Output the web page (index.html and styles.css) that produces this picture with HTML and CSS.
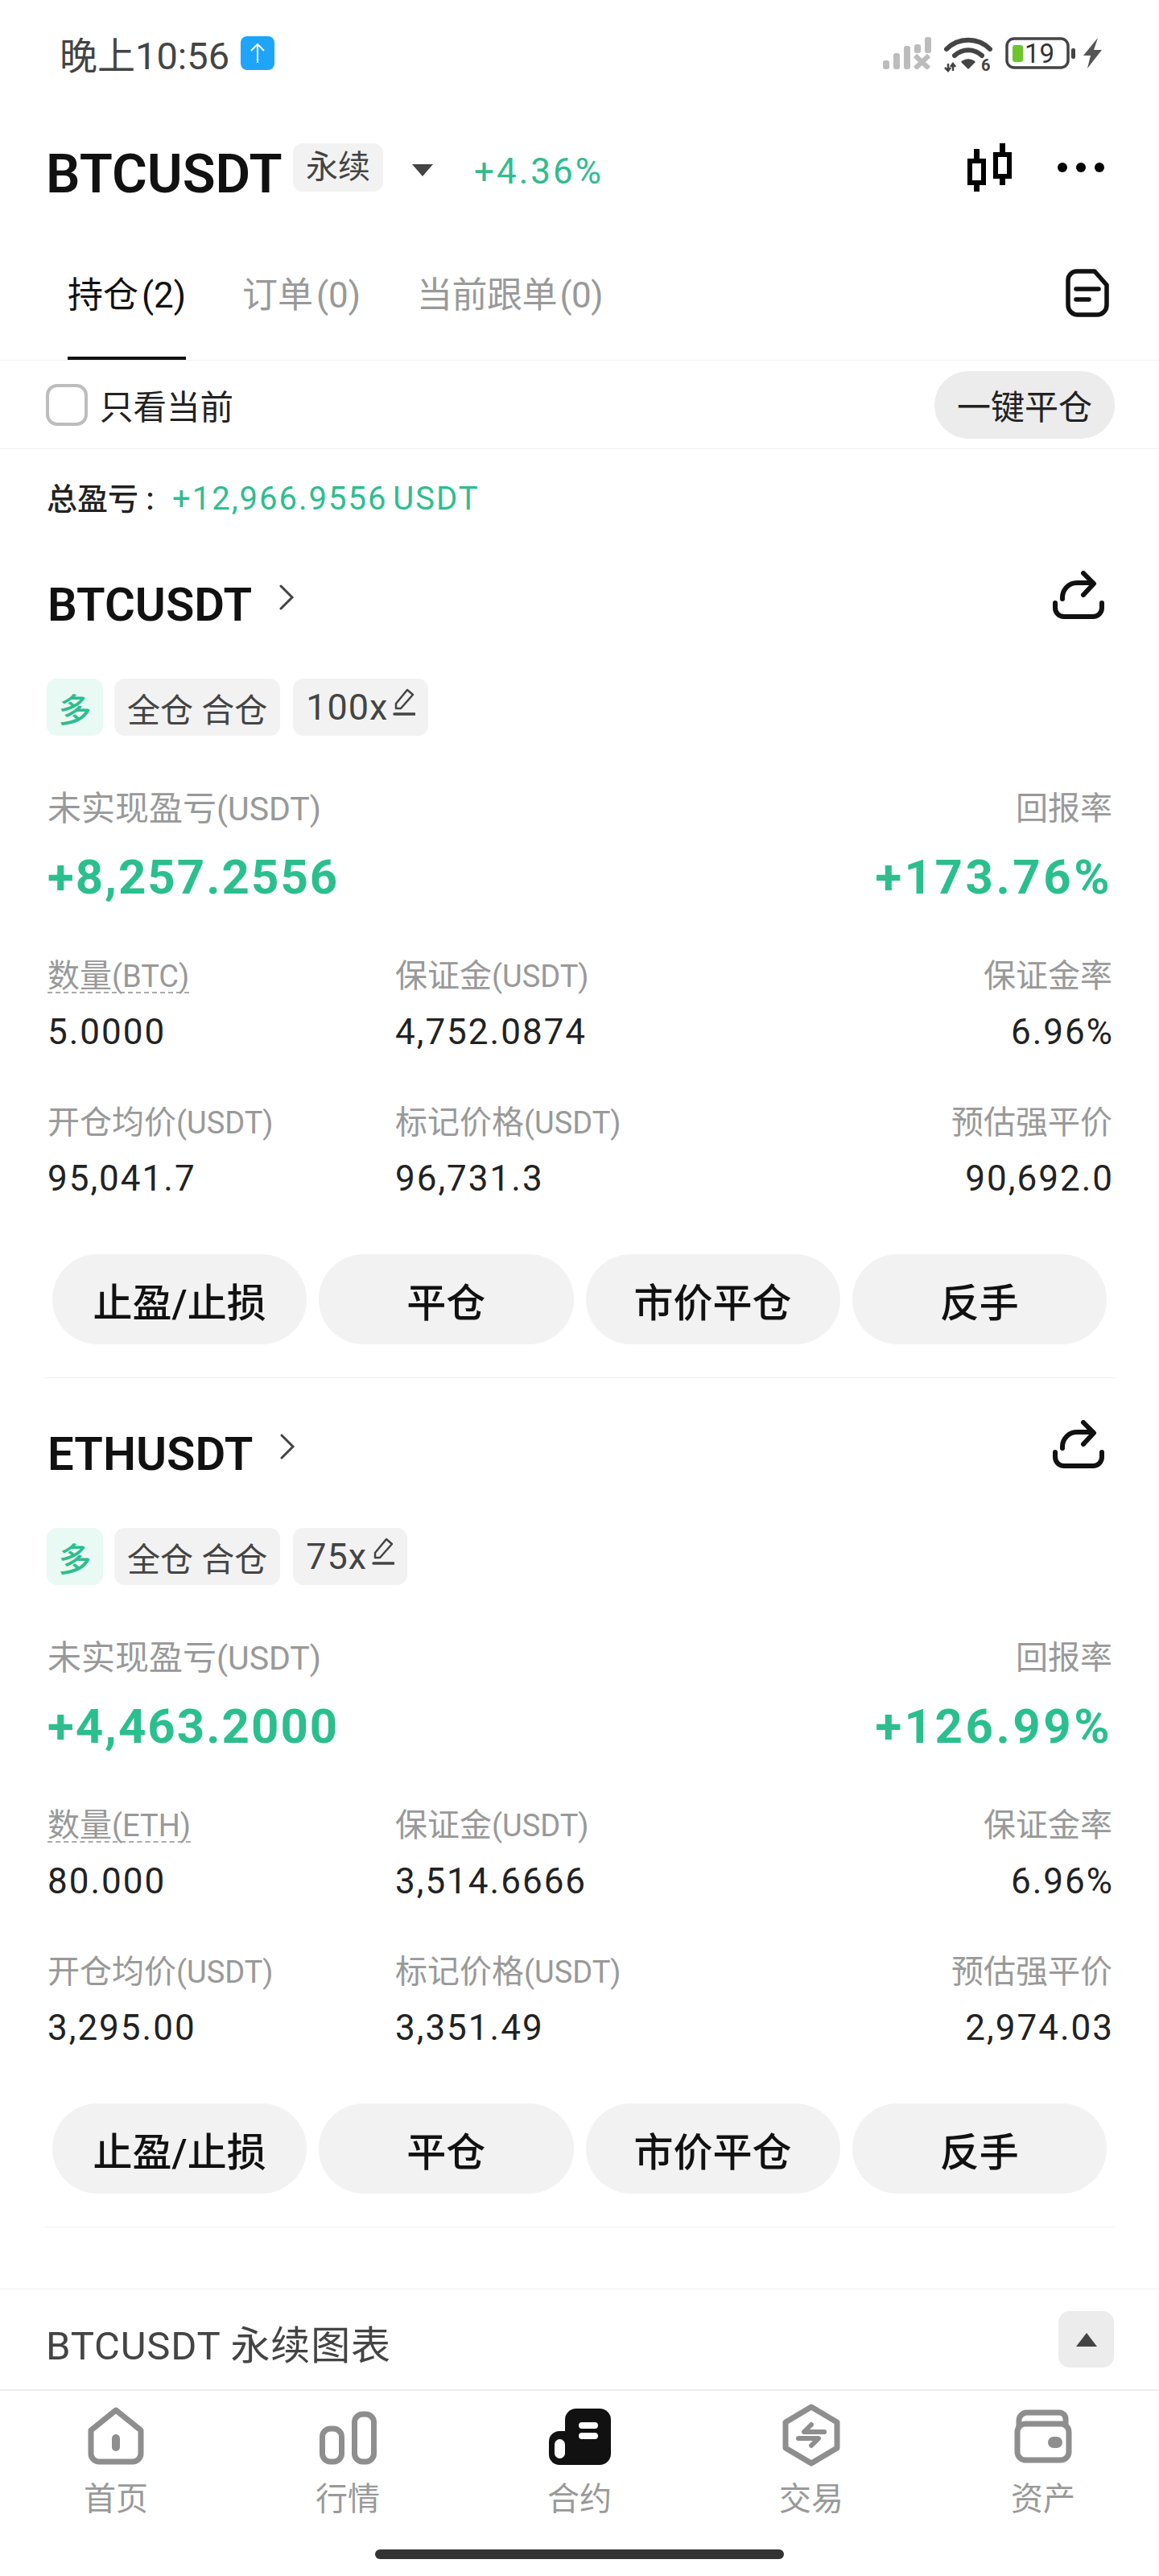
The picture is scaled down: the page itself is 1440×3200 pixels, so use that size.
FILE: index.html
```html
<!DOCTYPE html>
<html lang="zh-CN">
<head>
  <meta charset="UTF-8">
  <meta name="viewport" content="width=device-width, initial-scale=1.0">
  <title>BTCUSDT 永续</title>
  <link rel="stylesheet" href="styles.css">
</head>
<body>
  <!-- status bar -->
  <div class="status">
    <div class="status-left">
      <span class="clock">晚上10:56</span>
      <svg class="upload" width="42" height="42" viewBox="0 0 42 42">
        <rect width="42" height="42" rx="8" fill="#1ea5fb"/>
        <path d="M21 33V10M13 18l8-8 8 8" fill="none" stroke="#fff" stroke-width="2"/>
      </svg>
    </div>
    <div class="status-right">
      <svg width="60" height="40" viewBox="0 0 60 40">
        <g fill="#bcbcbc">
          <rect x="0" y="29" width="8" height="11" rx="3"/>
          <rect x="13" y="20" width="8" height="20" rx="3"/>
          <rect x="26" y="11" width="8" height="29" rx="3"/>
          <rect x="39" y="9" width="8" height="11" rx="3"/>
          <rect x="52" y="0" width="8" height="20" rx="3"/>
        </g>
        <path d="M40 23l17 16M57 23L40 39" stroke="#bcbcbc" stroke-width="6"/>
      </svg>
      <svg class="wifi" width="60" height="50" viewBox="0 0 60 50">
        <g fill="none" stroke="#444" stroke-linecap="round">
          <path d="M3 16C18 1 42 1 57 16" stroke-width="6"/>
          <path d="M13 24c10-9 24-9 34 0" stroke-width="6"/>
        </g>
        <path d="M21 32c5-5 13-5 18 0l-9 9z" fill="#444"/>
        <path d="M5 34v9M1 39l4 4 3-4M11 43v-9M8 38l3-4 3 4" fill="none" stroke="#444" stroke-width="2.500"/>
        <text class="wifi-six" x="46" y="43">6</text>
      </svg>
      <svg width="88" height="40" viewBox="0 0 88 40">
        <rect x="2" y="2" width="76" height="36" rx="9" fill="none" stroke="#444" stroke-width="3.500"/>
        <rect x="9" y="10" width="13" height="21" rx="3" fill="#6cc52d"/>
        <rect x="82" y="14" width="5" height="13" rx="2" fill="#444"/>
        <text class="battery-num" x="24" y="32">19</text>
      </svg>
      <svg class="bolt" width="24" height="38" viewBox="0 0 24 38">
        <path d="M19 0L1 22h9L6 38l18-23h-10z" fill="#555"/>
      </svg>
    </div>
  </div>

  <!-- symbol header -->
  <div class="head">
    <span class="symbol">BTCUSDT</span>
    <span class="perp">永续</span>
    <span class="caret"></span>
    <span class="change">+4.36%</span>
    <div class="head-icons">
      <svg width="56" height="60" viewBox="0 0 56 60">
        <g fill="none" stroke="#000" stroke-width="6">
          <rect x="3" y="22" width="17" height="27"/>
          <rect x="35" y="14" width="17" height="27"/>
        </g>
        <path d="M11.500 7v15M11.500 49v11M43.500 0v14M43.500 41v11" stroke="#000" stroke-width="7"/>
      </svg>
      <svg width="58" height="14" viewBox="0 0 58 14">
        <circle cx="6" cy="7" r="6"/><circle cx="29" cy="7" r="6"/><circle cx="52" cy="7" r="6"/>
      </svg>
    </div>
  </div>

  <!-- tabs -->
  <div class="tabs">
    <a class="tab active">持仓 (2)</a>
    <a class="tab">订单 (0)</a>
    <a class="tab">当前跟单 (0)</a>
    <svg class="doc-icon" width="54" height="60" viewBox="0 0 54 60">
      <path d="M14 3h22l15 17v25a12 12 0 0 1-12 12H15A12 12 0 0 1 3 45V14A11 11 0 0 1 14 3z" fill="none" stroke="#111" stroke-width="5.500" stroke-linejoin="round"/>
      <path d="M13 25h28M13 38h16" stroke="#111" stroke-width="5.500" stroke-linecap="round"/>
    </svg>
  </div>

  <div class="filter">
    <label class="check"><span class="box"></span>只看当前</label>
    <button class="close-all">一键平仓</button>
  </div>

  <div class="total">
    <span class="total-label">总盈亏 :</span>
    <span class="total-value">+12,966.9556 USDT</span>
  </div>

  <!-- BTC position -->
  <section class="card">
    <div class="card-title">
      <span class="pair">BTCUSDT</span>
      <svg class="chevron" width="20" height="32" viewBox="0 0 20 32">
        <path d="M3 2l14 14L3 30" fill="none" stroke="#444" stroke-width="3" stroke-linecap="round"/>
      </svg>
      <svg class="share" width="64" height="60" viewBox="0 0 64 60">
        <path d="M3 40v6a11 11 0 0 0 11 11h36a11 11 0 0 0 11-11v-6" fill="none" stroke="#111" stroke-width="6" stroke-linecap="round"/>
        <path d="M12 35v-2a18 18 0 0 1 18-18h20M38 3l13 13-13 14" fill="none" stroke="#111" stroke-width="6" stroke-linecap="round" stroke-linejoin="round"/>
      </svg>
    </div>
    <div class="tags">
      <span class="tag long">多</span>
      <span class="tag">全仓 合仓</span>
      <span class="tag"><span class="lever">100x</span>
        <svg class="pencil" width="28" height="36" viewBox="0 0 28 36">
          <path d="M18 3l7 6L10 26H4v-6z" fill="none" stroke="#444" stroke-width="2.500" stroke-linejoin="round"/>
          <path d="M2 33h25" stroke="#444" stroke-width="3.500" stroke-linecap="round"/>
        </svg>
      </span>
    </div>
    <div class="pnl">
      <span class="label big">未实现盈亏<span class="unit">(USDT)</span></span>
      <span class="label">回报率</span>
      <span class="pnl-value">+8,257.2556</span>
      <span class="pnl-value rate">+173.76%</span>
    </div>
    <div class="stats">
      <div class="stat"><span class="label dashed">数量<span class="unit">(BTC)</span></span><span class="value">5.0000</span></div>
      <div class="stat"><span class="label">保证金<span class="unit">(USDT)</span></span><span class="value">4,752.0874</span></div>
      <div class="stat end"><span class="label">保证金率</span><span class="value">6.96%</span></div>
      <div class="stat"><span class="label">开仓均价<span class="unit">(USDT)</span></span><span class="value">95,041.7</span></div>
      <div class="stat"><span class="label">标记价格<span class="unit">(USDT)</span></span><span class="value">96,731.3</span></div>
      <div class="stat end"><span class="label">预估强平价</span><span class="value">90,692.0</span></div>
    </div>
    <div class="actions">
      <button>止盈/止损</button>
      <button>平仓</button>
      <button>市价平仓</button>
      <button>反手</button>
    </div>
  </section>

  <!-- ETH position -->
  <section class="card">
    <div class="card-title">
      <span class="pair">ETHUSDT</span>
      <svg class="chevron" width="20" height="32" viewBox="0 0 20 32">
        <path d="M3 2l14 14L3 30" fill="none" stroke="#444" stroke-width="3" stroke-linecap="round"/>
      </svg>
      <svg class="share" width="64" height="60" viewBox="0 0 64 60">
        <path d="M3 40v6a11 11 0 0 0 11 11h36a11 11 0 0 0 11-11v-6" fill="none" stroke="#111" stroke-width="6" stroke-linecap="round"/>
        <path d="M12 35v-2a18 18 0 0 1 18-18h20M38 3l13 13-13 14" fill="none" stroke="#111" stroke-width="6" stroke-linecap="round" stroke-linejoin="round"/>
      </svg>
    </div>
    <div class="tags">
      <span class="tag long">多</span>
      <span class="tag">全仓 合仓</span>
      <span class="tag"><span class="lever">75x</span>
        <svg class="pencil" width="28" height="36" viewBox="0 0 28 36">
          <path d="M18 3l7 6L10 26H4v-6z" fill="none" stroke="#444" stroke-width="2.500" stroke-linejoin="round"/>
          <path d="M2 33h25" stroke="#444" stroke-width="3.500" stroke-linecap="round"/>
        </svg>
      </span>
    </div>
    <div class="pnl">
      <span class="label big">未实现盈亏<span class="unit">(USDT)</span></span>
      <span class="label">回报率</span>
      <span class="pnl-value">+4,463.2000</span>
      <span class="pnl-value rate">+126.99%</span>
    </div>
    <div class="stats">
      <div class="stat"><span class="label dashed">数量<span class="unit">(ETH)</span></span><span class="value">80.000</span></div>
      <div class="stat"><span class="label">保证金<span class="unit">(USDT)</span></span><span class="value">3,514.6666</span></div>
      <div class="stat end"><span class="label">保证金率</span><span class="value">6.96%</span></div>
      <div class="stat"><span class="label">开仓均价<span class="unit">(USDT)</span></span><span class="value">3,295.00</span></div>
      <div class="stat"><span class="label">标记价格<span class="unit">(USDT)</span></span><span class="value">3,351.49</span></div>
      <div class="stat end"><span class="label">预估强平价</span><span class="value">2,974.03</span></div>
    </div>
    <div class="actions">
      <button>止盈/止损</button>
      <button>平仓</button>
      <button>市价平仓</button>
      <button>反手</button>
    </div>
  </section>

  <!-- chart drawer -->
  <div class="chart-row">
    <span class="chart-title">BTCUSDT 永续图表</span>
    <span class="chart-toggle"><span class="caret-up"></span></span>
  </div>

  <!-- bottom nav -->
  <nav class="nav">
    <a class="nav-item">
      <svg width="72" height="72" viewBox="0 0 72 72">
        <path d="M36 4L67 29v29a10 10 0 0 1-10 10H15A10 10 0 0 1 5 58V29z" fill="none" stroke="#8e8e8e" stroke-width="7" stroke-linejoin="round"/>
        <rect x="31" y="34" width="10" height="21" rx="5" fill="#8e8e8e"/>
      </svg>
      首页
    </a>
    <a class="nav-item">
      <svg width="72" height="72" viewBox="0 0 72 72">
        <g fill="none" stroke="#8e8e8e" stroke-width="7">
          <rect x="4.500" y="27" width="24" height="41" rx="10"/>
          <rect x="44.500" y="9" width="24" height="59" rx="10"/>
        </g>
      </svg>
      行情
    </a>
    <a class="nav-item">
      <svg width="78" height="72" viewBox="0 0 78 72">
        <rect x="21" y="2" width="57" height="70" rx="14" fill="#111"/>
        <path d="M1 43a13 13 0 0 1 13-13h20v42H14A13 13 0 0 1 1 59z" fill="#111"/>
        <rect x="8" y="40" width="13" height="24" rx="6.500" fill="#fff"/>
        <rect x="22" y="61" width="4" height="11" fill="#111"/>
        <path d="M42 23h16M42 36h16" stroke="#fff" stroke-width="8" stroke-linecap="round"/>
      </svg>
      合约
    </a>
    <a class="nav-item">
      <svg width="72" height="78" viewBox="0 0 72 78" class="nav-tall">
        <path d="M36 4L68 23v32L36 74 4 55V23z" fill="none" stroke="#8e8e8e" stroke-width="7" stroke-linejoin="round"/>
        <path d="M36 26l-9 9h25M36 52l9-9H20" fill="none" stroke="#8e8e8e" stroke-width="6" stroke-linecap="round" stroke-linejoin="round"/>
      </svg>
      交易
    </a>
    <a class="nav-item">
      <svg width="72" height="72" viewBox="0 0 72 72">
        <path d="M6 26V17A10 10 0 0 1 16 7h40a8 8 0 0 1 8 8v10" fill="none" stroke="#8e8e8e" stroke-width="7"/>
        <rect x="4" y="21" width="64" height="45" rx="10" fill="none" stroke="#8e8e8e" stroke-width="7"/>
        <rect x="42" y="37" width="18" height="14" rx="7" fill="#8e8e8e"/>
      </svg>
      资产
    </a>
  </nav>
  <div class="home-bar"></div>
</body>
</html>
```

FILE: styles.css
```css
* {
  box-sizing: border-box;
}
body {
  margin: 0;
  width: 1440px;
  height: 3200px;
  overflow: hidden;
  background: #fff;
  color: #111;
  font-family: Roboto, "Noto Sans CJK SC", sans-serif;
}
button {
  font-family: inherit;
  border: none;
}

/* status bar */
.status {
  height: 132px;
  padding: 0 71px 0 74px;
  display: flex;
  align-items: center;
  justify-content: space-between;
}
.status-left {
  display: flex;
  align-items: center;
  gap: 14px;
}
.clock {
  margin-top: -2px;
  font-size: 47px;
  color: #444;
}
.status-right {
  display: flex;
  align-items: center;
  gap: 16px;
}
.status-right .bolt {
  margin-left: -8px;
}
.wifi {
  margin-top: 8px;
}
.wifi-six {
  font-size: 20px;
  font-weight: 700;
  fill: #444;
}
.battery-num {
  font-size: 33px;
  fill: #333;
}

/* header */
.head {
  height: 152px;
  padding: 0 68px 0 57px;
  display: flex;
  align-items: center;
}
.symbol {
  width: 293px;
  margin-top: 16px;
  font-size: 67px;
  font-weight: 600;
  white-space: nowrap;
}
.perp {
  margin-left: 14px;
  width: 112px;
  height: 60px;
  line-height: 60px;
  text-align: center;
  border-radius: 12px;
  background: #f2f2f2;
  color: #444;
  font-size: 40px;
}
.caret {
  margin: 6px 0 0 36px;
  width: 0;
  height: 0;
  border-left: 13px solid transparent;
  border-right: 13px solid transparent;
  border-top: 15px solid #444;
}
.change {
  margin: 10px 0 0 51px;
  font-size: 44px;
  letter-spacing: 3px;
  color: #2ebd8e;
}
.head-icons {
  margin-left: auto;
  display: flex;
  align-items: center;
  gap: 56px;
}

/* tabs */
.tabs {
  height: 164px;
  padding: 0 62px 0 84px;
  display: flex;
  border-bottom: 1px solid #f0f0f0;
}
.tab {
  height: 163px;
  padding-top: 58px;
  margin-right: 70px;
  line-height: 50px;
  font-size: 44px;
  word-spacing: -7px;
  color: #999;
  white-space: nowrap;
}
.tab:nth-child(3) {
  letter-spacing: -0.500px;
}
.tab.active {
  color: #111;
  border-bottom: 4px solid #111;
}
.doc-icon {
  margin: 50px 0 0 auto;
}

/* filter */
.filter {
  height: 110px;
  padding: 0 55px 0 57px;
  display: flex;
  align-items: center;
  justify-content: space-between;
  border-bottom: 1px solid #f0f0f0;
}
.check {
  display: flex;
  align-items: center;
  gap: 15px;
  font-size: 41.500px;
  color: #222;
}
.box {
  width: 52px;
  height: 52px;
  border: 4px solid #bdbdbd;
  border-radius: 14px;
}
.close-all {
  width: 224px;
  height: 84px;
  border-radius: 42px;
  background: #ececec;
  font-size: 42px;
  color: #222;
}

/* total */
.total {
  padding: 40px 58px 15px;
  line-height: 44px;
  display: flex;
  gap: 26px;
}
.total-label {
  width: 130px;
  font-size: 38px;
  font-weight: 500;
  color: #222;
  white-space: nowrap;
}
.total-value {
  font-size: 40px;
  letter-spacing: 2px;
  word-spacing: -5px;
  color: #2ebd8e;
}

/* position card */
.card {
  margin: 0 55px 0 56px;
  padding: 54px 3px 42px;
  height: 1055px;
  border-bottom: 1px solid #f0f0f0;
}
.card-title {
  height: 80px;
  display: flex;
  align-items: center;
}
.pair {
  font-size: 58px;
  font-weight: 600;
}
.chevron {
  margin: -18px 0 0 33px;
}
.share {
  margin: -24px 10px 0 auto;
}
.tags {
  margin-top: 52px;
  display: flex;
  gap: 16px;
}
.tag {
  height: 71px;
  padding: 0 16px;
  display: flex;
  align-items: center;
  gap: 6px;
  border-radius: 13px;
  background: #f2f2f2;
  font-size: 41px;
  color: #444;
}
.tag.long {
  margin-left: -1px;
  margin-right: -2px;
  width: 70px;
  justify-content: center;
  padding: 0;
  background: #e9f9f3;
  font-weight: 500;
  color: #2ebd8e;
}
.lever {
  font-size: 45px;
  letter-spacing: 1px;
}
.pencil {
  margin-top: -14px;
}
.pnl {
  margin-top: 66px;
  display: grid;
  grid-template-columns: 1fr auto;
  row-gap: 25px;
}
.pnl > :nth-child(even) {
  text-align: right;
}
.label {
  line-height: 50px;
  font-size: 40px;
  color: #999;
  white-space: nowrap;
}
.label.big {
  font-size: 42px;
}
.unit {
  line-height: 1;
  font-size: 38px;
}
.big .unit {
  font-size: 41px;
}
.pnl-value {
  line-height: 70px;
  font-size: 60px;
  font-weight: 700;
  letter-spacing: 2px;
  color: #2bbf8d;
}
.pnl-value.rate {
  letter-spacing: 3.500px;
}
.stats {
  margin-top: 63px;
  display: grid;
  grid-template-columns: 432px 1fr auto;
  row-gap: 63px;
}
.stat {
  display: flex;
  flex-direction: column;
  align-items: flex-start;
  gap: 19px;
}
.stat.end {
  align-items: flex-end;
}
.stat.end .value {
  margin-right: -2px;
}
.dashed {
  height: 46px;
  border-bottom: 2px dashed #aaa;
}
.dashed + .value {
  margin-top: 4px;
}
.value {
  line-height: 50px;
  font-size: 44px;
  letter-spacing: 2px;
  color: #222;
}
.actions {
  margin: 69px 7px 0 6px;
  display: grid;
  grid-template-columns: repeat(4, 1fr);
  gap: 15px;
}
.actions button {
  height: 112px;
  border-radius: 56px;
  background: #f2f2f2;
  font-size: 49px;
  font-weight: 500;
  color: #111;
}

/* chart drawer */
.chart-row {
  margin-top: 76px;
  height: 127px;
  padding: 0 56px 0 57px;
  display: flex;
  align-items: center;
  justify-content: space-between;
  border-top: 1px solid #f0f0f0;
  border-bottom: 2px solid #ececec;
  font-size: 49px;
  letter-spacing: 0.800px;
  color: #444;
}
.chart-title {
  margin-top: 6px;
}
.chart-toggle {
  width: 69px;
  height: 70px;
  display: flex;
  align-items: center;
  justify-content: center;
  border-radius: 14px;
  background: #ececec;
}
.caret-up {
  width: 0;
  height: 0;
  border-left: 13px solid transparent;
  border-right: 13px solid transparent;
  border-bottom: 17px solid #444;
}

/* bottom nav */
.nav {
  padding-top: 20px;
  display: grid;
  grid-template-columns: repeat(5, 1fr);
}
.nav-item {
  display: flex;
  flex-direction: column;
  align-items: center;
  gap: 18px;
  font-size: 40px;
  line-height: 50px;
  color: #999;
}
.nav-tall {
  margin: -4px 0 -2px;
}
.home-bar {
  margin: 37px auto 0;
  width: 508px;
  height: 12px;
  border-radius: 6px;
  background: #333;
}
```
